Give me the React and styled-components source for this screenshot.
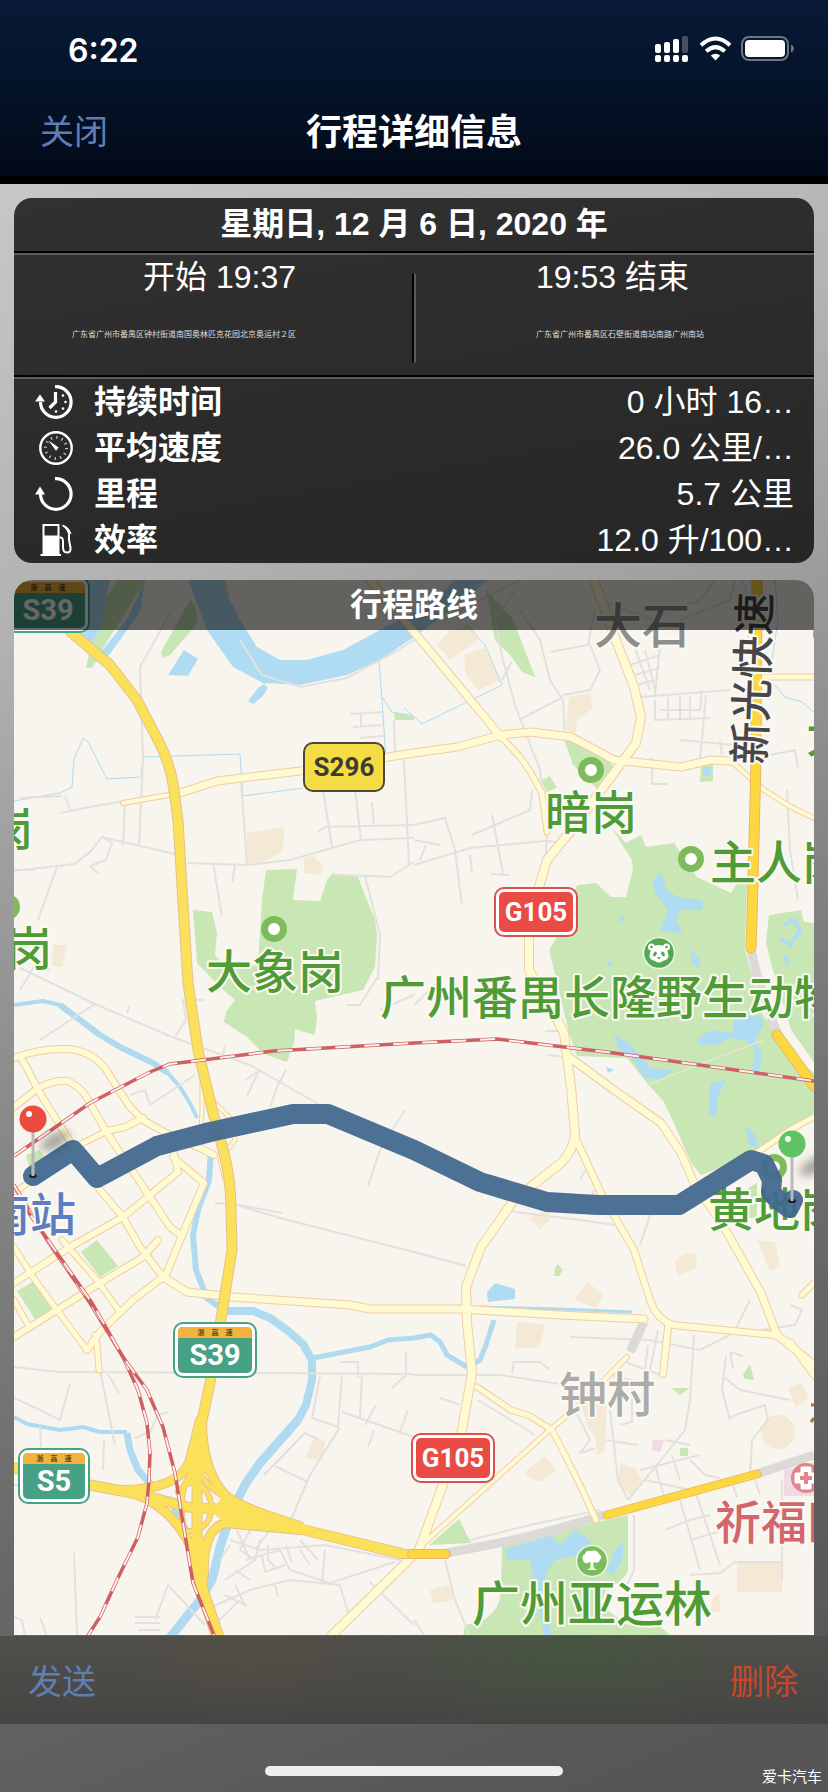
import React from "react";
import styled, { createGlobalStyle } from "styled-components";

const App = () => {
  return (
    <Page>
      <GlobalStyle />
      <Header>
        <StatusBar>
          <Clock>6:22</Clock>
          <StatusIcons />
        </StatusBar>
        <NavBar>
          <NavButton>关闭</NavButton>
          <NavTitle>行程详细信息</NavTitle>
        </NavBar>
      </Header>
      <Content>
        <Card>
          <DateTitle>星期日, 12 月 6 日, 2020 年</DateTitle>
          <Ends>
            <End $align="right">
              <Time>开始 19:37</Time>
              <Address>广东省广州市番禺区钟村街道南国奥林匹克花园北京奥运村２区</Address>
            </End>
            <EndDivider />
            <End $align="left">
              <Time>19:53 结束</Time>
              <Address>广东省广州市番禺区石壁街道南站南路广州南站</Address>
            </End>
          </Ends>
          <Stats>
            {stats.map(({ Icon, label, value }) => (
              <Stat key={label}>
                <Icon />
                <StatLabel>{label}</StatLabel>
                <StatValue>{value}</StatValue>
              </Stat>
            ))}
          </Stats>
        </Card>
        <MapPanel>
          <RouteMap />
          <MapTitle>行程路线</MapTitle>
        </MapPanel>
      </Content>
      <Toolbar>
        <ToolButton>发送</ToolButton>
        <ToolButton $danger>删除</ToolButton>
      </Toolbar>
      <Footer>
        <HomeIndicator />
        <Credit>爱卡汽车</Credit>
      </Footer>
    </Page>
  );
};

const StatusIcons = () => (
  <svg width="140" height="28" viewBox="0 0 140 28" aria-hidden="true">
    <g fill="#fff">
      <rect x="1" y="8" width="6" height="9" rx="2" />
      <rect x="10" y="6" width="6" height="11" rx="2" />
      <rect x="19" y="3" width="6" height="14" rx="2" />
      <rect x="28" y="0" width="6" height="17" rx="2" opacity="0.25" />
      <rect x="1" y="19" width="6" height="7" rx="2" />
      <rect x="10" y="19" width="6" height="7" rx="2" />
      <rect x="19" y="19" width="6" height="7" rx="2" />
      <rect x="28" y="19" width="6" height="7" rx="2" />
      <path d="M61.500 24.500 L56.800 19.500 Q61.500 15.800 66.200 19.500 Z" />
    </g>
    <g fill="none" stroke="#fff" strokeWidth="4">
      <path d="M47.000 9.200 Q61.500 -4.200 76.000 9.200" />
      <path d="M52.200 15.300 Q61.500 6.800 70.800 15.300" />
    </g>
    <rect x="88" y="1" width="46" height="23" rx="7" fill="none" stroke="#6b7584" strokeWidth="2" />
    <rect x="91" y="4" width="40" height="17" rx="4" fill="#fff" />
    <path d="M137 8.500 Q140 10 140 12.500 Q140 15 137 16.500 Z" fill="#6b7584" />
  </svg>
);

const DurationIcon = () => (
  <svg width="40" height="36" viewBox="0 0 40 36" aria-hidden="true">
    <path d="M21 2.700 A15.300 15.300 0 1 1 6.500 18" fill="none" stroke="#fff" strokeWidth="3.200" />
    <path d="M1 17.500 L6 10.500 L11 17.500 Z" fill="#fff" />
    <path d="M21.500 8 V18 L15.500 24" fill="none" stroke="#fff" strokeWidth="3.200" />
    <g fill="#fff">
      <circle cx="29" cy="11.500" r="1.300" />
      <circle cx="31.500" cy="18" r="1.300" />
      <circle cx="29" cy="24.500" r="1.300" />
      <circle cx="22" cy="27.500" r="1.300" />
    </g>
  </svg>
);

const SpeedIcon = () => (
  <svg width="40" height="36" viewBox="0 0 40 36" aria-hidden="true">
    <circle cx="22" cy="18" r="15.700" fill="none" stroke="#fff" strokeWidth="2.400" />
    <circle cx="22" cy="18" r="10.500" fill="none" stroke="#ccc" strokeWidth="3" strokeDasharray="1.200 4.298" />
    <path d="M14.500 10.500 L24.700 17.500 L22 20.700 Z" fill="#fff" />
  </svg>
);

const DistanceIcon = () => (
  <svg width="40" height="36" viewBox="0 0 40 36" aria-hidden="true">
    <path d="M21 2.700 A15.300 15.300 0 1 1 6.500 18" fill="none" stroke="#fff" strokeWidth="3.200" />
    <path d="M1 18.500 L6 10.500 L11 18.500 Z" fill="#fff" />
  </svg>
);

const FuelIcon = () => (
  <svg width="40" height="36" viewBox="0 0 40 36" aria-hidden="true">
    <path d="M8.500 2 H25.500 V32 H27 V34 H6.500 V32 H8.500 Z M10.500 4 V13.500 H23.500 V4 Z" fill="#fff" fillRule="evenodd" />
    <path
      d="M25.500 15.500 Q29 15 29 19 V25 Q29 30.500 33 30.500 Q37 30.500 36.500 26 L35 18 V11"
      fill="none"
      stroke="#fff"
      strokeWidth="2"
    />
    <path d="M28.500 2.500 Q35.500 5 37.500 12 L33.500 11 Q33 7 28.500 4.500 Z" fill="#fff" />
  </svg>
);

const stats = [
  { Icon: DurationIcon, label: "持续时间", value: "0 小时 16…" },
  { Icon: SpeedIcon, label: "平均速度", value: "26.0 公里/…" },
  { Icon: DistanceIcon, label: "里程", value: "5.7 公里" },
  { Icon: FuelIcon, label: "效率", value: "12.0 升/100…" },
];

const parks = [
  "M266 870 L297 869 L293 900 L320 901 L327 880 L333 873 L358 877 L375 920 L377 935 L375 967 L363 990 L315 1001 L317 1017 L315 1035 L295 1029 L294 1043 L287 1062 L275 1058 L263 1053 L247 1037 L224 1022 L226 1012 L235 1000 L220 987 L197 963 L193 910 L212 912 L217 933 L215 955 L225 968 L258 965 L262 900Z",
  "M611 827 L626 843 L641 835 L646 847 L674 843 L697 877 L731 893 L737 883 L747 883 L745 950 L764 1017 L781 1033 L806 1067 L814 1073 L814 1113 L761 1147 L734 1163 L701 1175 L691 1163 L677 1130 L664 1102 L647 1083 L627 1058 L577 1056 L569 1033 L554 970 L549 950 L557 937 L577 885 L596 883 L611 897 L626 897 L633 870 L632 860Z",
  "M769 915 L801 910 L804 922 L814 923 L814 1062 L791 1030 L772 967 L766 943Z",
  "M98 610 L118 580 L146 580 L108 640 L92 668 L86 668Z",
  "M190 600 Q200 608 196 625 L170 655 L162 658 L161 652Z",
  "M214 580 L226 580 L229 596 L220 592Z",
  "M486 590 L512 618 L521 640 L535 677 L522 672 L510 655 L495 640Z",
  "M564 739 Q600 748 613 767 Q612 778 598 790 L588 780 L573 765Z",
  "M542 780 L550 776 L557 788 L546 792Z",
  "M701 764 L713 764 L713 781 L700 782Z",
  "M394 712 L414 717 L414 720 L395 720Z",
  "M81 1252 L97 1240 L118 1266 L100 1277Z",
  "M17 1291 L34 1281 L52 1310 L36 1321Z",
  "M26 1155 L40 1150 L46 1160 L30 1170Z",
  "M748 1188 L757 1183 L757 1218 L748 1218Z",
  "M429 1545 L459 1519 L471 1543Z",
  "M502 1545 L628 1515 L628 1570 Q625 1580 606 1590 L600 1605 L628 1625 L653 1620 L672 1637 L463 1637 L465 1625 Q500 1620 501 1590Z",
  "M555 1268 L558 1264 L563 1270 L559 1276 L554 1276Z",
  "M743 1375 L750 1364 L754 1380 L745 1379Z",
  "M671 1388 L690 1388 L680 1395Z",
  "M680 1448 L688 1448 L688 1456 L680 1456Z",
];

const blocks = [
  "M247 833 L284 827 L283 851 L262 863 L247 863Z",
  "M304 858 L313 856 L323 865 L321 875 L304 873Z",
  "M450 630 L470 625 L478 640 L450 660 L437 645Z",
  "M464 655 L485 648 L500 680 L478 690 L466 675Z",
  "M569 697 L590 693 L593 708 L577 720 L575 735 L566 730Z",
  "M53 945 L67 945 L62 967 L52 966Z",
  "M517 1322 L545 1324 L541 1342 L535 1348 L515 1349Z",
  "M574 1300 L588 1282 L603 1295 L596 1308Z",
  "M675 1262 Q683 1250 696 1255 L697 1267 L678 1276Z",
  "M757 1240 L775 1242 L780 1265 L770 1272Z",
  "M788 1388 L802 1383 L808 1398 L796 1408Z",
  "M525 1472 L545 1456 L557 1470 L540 1482 L530 1478Z",
  "M620 1463 L635 1468 L642 1480 L631 1495 L618 1485Z",
  "M737 1563 L782 1563 L782 1592 L737 1592Z",
  "M430 1590 L452 1584 L453 1600 L433 1604Z",
  "M314 1438 L326 1441 L320 1461 L306 1458Z",
  "M581 1405 L607 1403 L605 1452 L597 1455 L595 1436 L588 1428Z",
  "M528 1218 L548 1210 L550 1220 L540 1229Z",
  "M712 1600 L719 1592 L720 1612 L711 1612Z",
];

const lakes = [
  "M188 580 L207 630 L233 667 L263 683 L268 688 L262 697 L253 704 L248 701 L258 688 L266 683 L300 685 L347 675 L380 660 L414 637 L440 618 L488 580 L455 580 L430 605 L380 630 L343 650 L307 660 L280 660 L257 647 L240 620 L225 590 L222 580Z",
  "M78 631 L86 580 L110 580 L100 630 L90 645Z",
  "M145 580 L140 612 L107 658 L101 652 L128 618Z",
  "M184 650 L198 659 L188 676 L168 675Z",
  "M653 880 L662 872 L666 890 L680 898 L703 900 L702 910 L680 910 L676 920 L683 933 L660 931 L668 910 L655 893Z",
  "M614 1034 L627 1042 L641 1055 L650 1068 L673 1070 L660 1080 L643 1077 L635 1062 L618 1048Z",
  "M697 1038 L712 1030 L732 1033 L735 1018 L760 1015 L764 1025 L755 1040 L762 1055 L758 1078 L752 1070 L755 1050 L745 1040 L730 1038 L718 1045 L698 1044Z",
  "M710 1084 L726 1080 L718 1096 L716 1117 L709 1115Z",
  "M690 948 L700 960 L699 969 L692 962Z",
  "M605 962 L613 962 L610 968Z",
  "M606 1067 L614 1070 L608 1073Z",
  "M618 918 L625 916 L622 924Z",
  "M745 1125 L755 1135 L760 1150 L748 1143Z",
  "M487 1292 L495 1283 L515 1289 L515 1299 L488 1302Z",
  "M504 1550 L550 1535 L560 1545 L575 1530 L590 1540 L590 1553 L555 1560 L545 1575 L545 1592 L552 1637 L545 1637 L535 1590 L530 1560 L508 1560Z",
  "M607 1570 L615 1550 L624 1542 L622 1562 L612 1575Z",
  "M703 767 L711 767 L711 776 L703 776Z",
  "M170 1495 L190 1530 L186 1530 L172 1515Z",
];

const rivers = [
  { w: 4, d: "M14 1005 L43 1001 L60 1005" },
  { w: 6, d: "M60 1005 L72 1014 L100 1035 L120 1047 L153 1063 L168 1073" },
  { w: 4, d: "M168 1073 L180 1087 L190 1103 L197 1118" },
  { w: 6, d: "M211 1150 L209 1180 L198 1210 L193 1235 L196 1270 L207 1298 L225 1311" },
  { w: 8, d: "M225 1311 L253 1311 L270 1318 L287 1330 L303 1344 L312 1360 L312 1380 L306 1405 L298 1420" },
  { w: 9, d: "M298 1420 L260 1463 L246 1483 L233 1508 L220 1547 L212 1580 L200 1600 L168 1640" },
  { w: 5, d: "M313 1358 L370 1347 L388 1340 L414 1338 L431 1335 L440 1342 L447 1355 L467 1367 L480 1360 L486 1345 L494 1320" },
  { w: 4, d: "M14 1417 L27 1424 L60 1430 L83 1427 L100 1432 L127 1432" },
  { w: 7, d: "M127 1433 L130 1450 L138 1470 L153 1487" },
  { w: 3, d: "M481 1307 L560 1309 L632 1312" },
  { w: 1, d: "M14 801 L60 793 L72 787 L74 760 L83 738 L88 742 L107 779 L141 777 L143 757 L240 754 L243 796 L303 788" },
  { w: 1, d: "M379 660 L382 700 L386 760 M382 697 L392 712 L414 716" },
  { w: 1, d: "M466 624 L485 645 L502 685 L422 724 L404 708" },
  { w: 1, d: "M742 580 L750 605 L748 640 M775 580 L778 620 L772 660 M770 680 L785 697 L802 702 L814 712" },
];

const streets = [
  "M172 610 L140 667 L143 760 L139 846 M14 871 L74 864 L90 852 L102 837 L175 854",
  "M14 870 L35 870 M57 867 L38 920 M102 837 L112 843 L106 860 L90 866 L99 874",
  "M60 813 L90 807 L124 801 M125 802 L123 845 M65 796 L70 810 M20 798 L62 796",
  "M188 863 L247 865 L290 860 L360 840 L414 838 M241 780 L247 865 M213 863 L222 916 M235 866 L232 882",
  "M323 790 L332 847 M318 832 L325 827 L414 825 M355 790 L361 840 M372 802 L374 827 M404 760 L409 865",
  "M350 714 L384 712 M361 714 L361 727 M353 727 L384 725 M360 738 L384 736 M394 720 L395 752",
  "M333 875 L375 876 L390 877 L414 862 M365 876 L380 935 L378 980 M377 978 L360 1005 L347 1005",
  "M20 968 L95 1004 L172 1037 L250 1065 L320 1105 M95 1004 L40 1040 M127 1013 L130 1005 M175 1037 L186 1020 L183 1000 L203 1000",
  "M130 1095 L145 1090 L150 1105 L195 1075 M222 1060 L225 1045 M245 1080 L258 1072 L247 1096 M286 1070 L278 1085 L270 1107",
  "M405 1110 L380 1150 L368 1186 M215 1203 L240 1205 L282 1213 M240 1206 L280 1218 L414 1252 L466 1266",
  "M240 640 L262 675 L300 687 L347 678 L395 652 L414 640 M414 1252 L466 1266",
  "M443 620 L480 600 L520 580 M515 590 L495 620 L503 660 L515 705 L540 770 L543 790",
  "M520 610 L540 640 L550 680 L563 700 L565 740 M550 652 L588 645 L595 610 M590 645 L600 670 L590 690 L563 695",
  "M519 720 L563 697 M512 661 L502 680 M640 697 L730 690 M655 700 L655 720 L710 718 M660 710 L700 710 L702 690 M668 697 L668 720 M680 697 L680 720 M690 697 L690 720",
  "M632 640 L650 690 M645 650 L655 690 M630 665 L660 655 M635 675 L660 668 M637 685 L655 680 M660 645 L655 695",
  "M706 695 L700 760 M652 757 L652 784 L668 784 M680 740 L735 745 M770 755 L795 750 L798 768",
  "M414 825 L445 818 L455 850 L462 905 M472 835 L530 810 L532 790 M492 815 L503 873 L500 875 M414 865 L470 848 L545 841 L560 842",
  "M547 832 L545 870 M414 840 L440 845 M426 845 L420 860 M491 874 L510 875 M470 855 L472 872",
  "M787 790 L790 850 L798 900 M720 740 L722 755 M680 620 L730 600 L735 580 M600 600 L650 620 L700 600 L715 580",
  "M545 1031 L560 1031 M548 1055 L565 1057 M414 1005 L440 980 M380 1010 L414 995",
  "M14 1367 L60 1372 L414 1374 M100 1370 L115 1445 M108 1374 L119 1393 M40 1426 L41 1447 M104 1440 L103 1470",
  "M14 1398 L40 1410 L60 1420 L70 1383 M135 1438 L150 1432 L158 1415 L168 1412",
  "M320 1376 L312 1418 L338 1427 L342 1375 M342 1412 L414 1437 M362 1375 L360 1418 M376 1405 L365 1425 M340 1362 L358 1362 L358 1378 M406 1352 L406 1375 L392 1388 M340 1427 L310 1475 L290 1522 M408 1410 L400 1432 M374 1430 L368 1447",
  "M264 1475 L305 1433 L320 1440 M275 1466 L308 1482",
  "M74 1553 L77 1637 M135 1617 L160 1617 M135 1623 L160 1623 M138 1630 L160 1630 M155 1620 L168 1585 L205 1625 M40 1617 L47 1637 M14 1617 L22 1620 L25 1637",
  "M230 1540 L260 1550 L325 1545 L400 1560 M225 1580 L255 1560 L260 1540 M237 1530 L250 1560 M245 1560 L280 1550 M280 1550 L290 1570 L330 1583 L395 1562 M262 1555 L265 1572 L285 1565 M270 1530 L255 1550 M300 1550 L310 1565 M325 1550 L322 1583",
  "M205 1610 L250 1590 L290 1580 L340 1585 L350 1620 M225 1595 L245 1605 L235 1585 M214 1625 L240 1600 M370 1582 L414 1625 M275 1585 L278 1597",
  "M230 1545 L220 1560 M250 1530 L240 1550 L255 1560 M268 1545 L268 1560 L278 1570 M286 1545 L292 1563 M300 1540 L318 1560 M235 1570 L250 1580",
  "M414 1375 L500 1375 L560 1384 M512 1373 L514 1362 L540 1362 L550 1370 M440 1398 L460 1405 M478 1400 L535 1435 M570 1337 L650 1340 L700 1350 L730 1335",
  "M658 1330 L648 1380 L640 1400 M694 1335 L690 1400 L685 1430 L665 1455 L628 1500 M648 1345 L645 1370 M620 1360 L660 1375 M610 1375 L655 1385",
  "M726 1356 L722 1390 L730 1420 M725 1378 L740 1390 L790 1400 M730 1417 L765 1405 L768 1420 L752 1440 L750 1475 M730 1352 L733 1368 M730 1352 L743 1356",
  "M610 1410 L618 1480 L628 1500 M640 1470 L700 1455 M655 1465 L665 1500 M672 1455 L680 1480 M690 1460 L705 1475 L720 1478 M645 1480 L690 1490 M665 1440 L690 1445",
  "M680 1500 L700 1570 M695 1490 L720 1565 M665 1530 L690 1520 L710 1515 M690 1540 L718 1532 M733 1485 L737 1497 M755 1480 L760 1495",
  "M634 1515 L634 1570 L625 1590 M690 1575 L720 1573 L735 1562 L782 1562 M782 1480 L782 1580 M445 1560 L455 1600 L470 1637 M414 1620 L425 1637",
  "M735 1330 L750 1300 M790 1305 L802 1310 L795 1325 L760 1330 M575 1410 L590 1440 L580 1453 L595 1448 M606 1440 L637 1445 M620 1425 L632 1422 L632 1380",
  "M500 1210 L580 1220 L615 1225 M650 1215 L640 1245 M594 1190 L590 1210 M585 1170 L580 1180",
  "M470 1540 L530 1525 L600 1510 M476 1545 L600 1515 M14 1485 L30 1486 M20 990 L35 965 L50 970",
];

const tunnels = [
  "M447 1553 L530 1537 L604 1515",
  "M757 1474 L814 1455",
  "M751 950 L757 975 L777 1033",
  "M644 1322 L630 1352",
  "M756 640 L756 760",
];

const roads = [
  { w: 6, d: "M14 1058 Q40 1048 67 1049 Q90 1050 105 1068 L117 1087 L130 1107 L143 1120 L173 1137 L200 1148 L214 1155" },
  { w: 6, d: "M22 1060 L28 1070 L38 1090 L63 1130 L100 1190 L123 1217 L140 1247 L163 1277" },
  { w: 6, d: "M14 1107 L38 1088 Q55 1079 68 1081 Q80 1087 86 1096 L107 1133 L150 1197 L170 1227 L182 1236" },
  { w: 6, d: "M107 1131 L125 1127 L143 1118" },
  { w: 5, d: "M14 1193 L83 1143 L107 1131" },
  { w: 6, d: "M14 1283 L70 1247 L123 1217 L150 1195 L178 1172 L171 1140" },
  { w: 6, d: "M173 1157 L204 1183 L183 1233 L165 1277" },
  { w: 6, d: "M14 1337 L57 1310 L100 1283 L143 1257 L158 1240" },
  { w: 5, d: "M14 1247 L33 1277 L57 1310 L87 1350" },
  { w: 5, d: "M14 1300 L28 1325" },
  { w: 6, d: "M87 1350 L100 1332 L133 1300 L163 1277" },
  { w: 5, d: "M62 1240 L97 1280 L120 1312" },
  { w: 5, d: "M95 1335 L97 1345 L99 1370" },
  { w: 7, d: "M163 1277 L187 1292 L233 1297 L350 1305 L370 1309 L461 1309 L560 1315 L644 1319" },
  { w: 3, d: "M200 1150 L202 1110 L202 1080 M212 1100 L230 1118 L235 1140 L220 1160 L225 1180" },
  { w: 4, d: "M123 803 L180 793" },
  { w: 7, d: "M180 793 L217 781 L300 771 L414 753 L457 747 L501 735 L531 732 L571 737 L590 747 L614 760 L681 767 L711 760 L731 761" },
  { w: 4, d: "M731 761 L764 790 L791 807 L814 818" },
  { w: 7, d: "M370 580 L414 632 L454 680 L501 737" },
  { w: 5, d: "M501 737 L520 757 L531 773 L542 793 L547 832" },
  { w: 8, d: "M594 580 L617 643 L634 687 L641 717 L636 743 L611 777 L574 827 L547 860 L539 887 L529 937 L529 970 L547 1000 L564 1033 L571 1087 L575 1133 Q574 1150 561 1163 L514 1200 L481 1247 L466 1287 L467 1323 L472 1373 L462 1430 L441 1490 L419 1550 L327 1640" },
  { w: 6, d: "M575 1137 L601 1193 L634 1250 L651 1303 Q658 1320 673 1325 L774 1335 L791 1343 L814 1375" },
  { w: 7, d: "M569 1057 L614 1090 L661 1123 L681 1153 L694 1183 L724 1227 L737 1250 L761 1293 L777 1335 L814 1365" },
  { w: 5, d: "M758 1152 L790 1130 L814 1117" },
  { w: 6, d: "M668 1327 L663 1374" },
  { w: 5, d: "M477 1387 L511 1410 L530 1416 L552 1430 L564 1453 L580 1485 L596 1520" },
  { w: 4, d: "M424 1543 L552 1428 L574 1410 L627 1357" },
  { w: 5, d: "M760 677 L814 677" },
  { w: 5, d: "M802 1295 L814 1283" },
];

const highways = [
  { w: 9, d: "M50 608 L72 633 L110 665 L137 700 L158 740 Q171 765 174 790 L178 820 L184 920 L188 983 L198 1050 L213 1113 L224 1153 Q231 1180 231 1210 L232 1250 L222 1313 L210 1383 L200 1430 L197 1470 L197 1550" },
  { w: 9, d: "M14 1468 L90 1485 L143 1495 L187 1507 L233 1510 L300 1529 L400 1553" },
  { w: 8, d: "M120 1490 Q180 1490 190 1460 L200 1420" },
  { w: 8, d: "M202 1420 Q202 1470 225 1495 Q240 1508 300 1526" },
  { w: 8, d: "M130 1492 Q170 1505 190 1545 L202 1590" },
  { w: 8, d: "M204 1575 Q202 1530 225 1523 L300 1530" },
  { w: 11, d: "M197 1540 L202 1590 L219 1640" },
  { w: 4, d: "M184 1530 Q178 1500 186 1484 Q200 1480 208 1494 Q216 1510 206 1524 Q196 1534 184 1530" },
  { w: 4, d: "M203 1478 Q216 1496 238 1502 M203 1546 Q210 1528 236 1518 M178 1492 Q188 1484 192 1466" },
  { w: 8, d: "M300 1529 L400 1554 L446 1554" },
];

// filled gores between the ramps of the interchange
const gores = [
  "M196 1440 L204 1440 L208 1470 L196 1490 L190 1484 L188 1465Z",
  "M222 1496 Q250 1508 300 1522 L330 1536 L262 1524 L224 1522 L212 1512Z",
  "M110 1486 L148 1490 L166 1500 L148 1501 L120 1495Z",
  "M192 1535 L203 1540 L205 1580 L198 1570Z",
];

const deepHighways = [
  { w: 9, d: "M757 580 L756 760 L752 920 L751 948" },
  { w: 9, d: "M777 1035 L814 1086" },
  { w: 7, d: "M607 1515 L757 1474" },
  { w: 8, d: "M412 1554 L445 1554" },
];

const rails = [
  "M14 1156 L90 1103 L150 1072 L170 1064 L203 1060 L273 1051 L414 1043 L497 1039 L614 1053 L814 1081",
  "M14 1185 L47 1240 L90 1303 L123 1357 L138 1390 L147 1423 L150 1453 L149 1480 L147 1503 L138 1537 L117 1580 L100 1617 L85 1640",
  "M14 1192 L48 1240 L92 1303 L123 1357 L147 1390 L163 1427 L175 1473 L182 1517 L187 1547 L193 1583 L216 1640",
];

const route =
  "M33 1176 L73 1150 L97 1178 L157 1146 L210 1132 L293 1114 L328 1114 L414 1150 L480 1182 L547 1202 L597 1205 L679 1205 L751 1160 L764 1164 L772 1180 L771 1192 L778 1200 L789 1208 L793 1200";

const RouteMap = () => (
  <MapDrawing viewBox="14 580 800 1055" role="img" aria-label="行程路线">
    <rect x="14" y="580" width="800" height="1060" fill="#f8f5ee" />
    <g fill="#f4e9d5">
      {blocks.map((d) => (
        <path key={d} d={d} />
      ))}
      <circle cx="778" cy="1432" r="17" />
    </g>
    <g fill="#c9e6b5">
      {parks.map((d) => (
        <path key={d} d={d} />
      ))}
    </g>
    <path d="M784 1470 L814 1462 L814 1496 L784 1496Z M653 1440 L664 1440 L660 1452 L652 1450Z" fill="#f1d9e6" />
    <g fill="#afdcf3">
      {lakes.map((d) => (
        <path key={d} d={d} />
      ))}
    </g>
    <path d="M783 925 L795 920 L800 930 L790 945 L780 938 M785 955 L788 965" fill="none" stroke="#afdcf3" strokeWidth="4" />
    <g fill="none" stroke="#afdaf0" strokeLinejoin="round">
      {rivers.map(({ w, d }) => (
        <path key={d} d={d} strokeWidth={w} />
      ))}
    </g>
    <g fill="none" stroke="#e3e1de" strokeWidth="2">
      {streets.map((d) => (
        <path key={d} d={d} />
      ))}
    </g>
    <g fill="none" stroke="#dcdad7" strokeWidth="9">
      {tunnels.map((d) => (
        <path key={d} d={d} />
      ))}
    </g>
    <path d="M647 1085 L690 1068 L764 1040" fill="none" stroke="#dfe9cf" strokeWidth="1.5" />
    <Lines items={roads} casing="#f0cda6" fill="#fefad2" />
    <Lines items={highways} casing="#e8bf8c" fill="#fbe159" />
    <g fill="#fbe159">
      {gores.map((d) => (
        <path key={d} d={d} />
      ))}
    </g>
    <Lines items={deepHighways} casing="#e9b765" fill="#fdd740" />
    <g fill="none">
      {rails.map((d) => (
        <g key={d}>
          <path d={d} stroke="#cf5f63" strokeWidth="3.500" />
          <path d={d} stroke="#fdf3ee" strokeWidth="2" strokeDasharray="15 14" />
        </g>
      ))}
    </g>

    <Dot cx="591" cy="770" />
    <Dot cx="691" cy="859" />
    <Dot cx="274" cy="929" />
    <Dot cx="7" cy="907" />
    <Dot cx="774" cy="1167" />
    <Dot cx="826" cy="634" />

    <circle cx="659" cy="953" r="15.500" fill="#55a655" stroke="#eef6e6" strokeWidth="1.500" />
    <g fill="#fff">
      <circle cx="651.500" cy="947" r="3.500" />
      <circle cx="666.500" cy="947" r="3.500" />
      <path d="M659 945 C665 945 668 950 668 954 C670 957 667 960 663 961 Q659 964 655 961 C651 960 648 957 650 954 C650 950 653 945 659 945Z" />
    </g>
    <g fill="#55a655">
      <circle cx="651.500" cy="947" r="1.300" />
      <circle cx="666.500" cy="947" r="1.300" />
      <ellipse cx="655" cy="954" rx="1.600" ry="2.600" transform="rotate(30 655 954)" />
      <ellipse cx="663" cy="954" rx="1.600" ry="2.600" transform="rotate(-30 663 954)" />
      <path d="M657 957 H661 L659 959.500Z" />
    </g>

    <circle cx="592" cy="1561" r="15.500" fill="#79bd5c" stroke="#eef6e6" strokeWidth="1.500" />
    <path
      d="M590.500 1562 Q584 1565 583 1560 Q581 1556 585 1554 Q586 1550 591 1551 Q597 1549 599 1554 Q603 1556 600 1560 Q599 1564 593.500 1562 V1567 Q594 1569 597 1570 H587 Q590 1569 590.500 1567Z"
      fill="#fff"
    />

    <circle cx="806" cy="1478" r="15" fill="#e28488" />
    <path d="M802 1468 H810 V1474 H816 V1482 H810 V1488 H802 V1482 H796 V1474 H802Z" fill="#fff" stroke="#fff" strokeWidth="3" strokeLinejoin="round" />
    <path d="M804 1472 H808 V1476 H812 V1480 H808 V1484 H804 V1480 H800 V1476 H804Z" fill="#e28488" />
    <path d="M811 1405 h3 M811 1422 l3 -4" stroke="#a3793a" strokeWidth="3" />

    <MapLabel x="591" y="829" textAnchor="middle">暗岗</MapLabel>
    <MapLabel x="710" y="879">主人岗</MapLabel>
    <MapLabel x="275" y="988" textAnchor="middle">大象岗</MapLabel>
    <MapLabel x="33" y="845" textAnchor="end">岗</MapLabel>
    <MapLabel x="52" y="965" textAnchor="end">岗</MapLabel>
    <MapLabel x="806" y="752">大</MapLabel>
    <MapLabel x="380" y="1014">广州番禺长隆野生动物</MapLabel>
    <MapLabel x="708" y="1226">黄地岗</MapLabel>
    <MapLabel x="592" y="1621" textAnchor="middle" $size={48}>广州亚运林</MapLabel>
    <MapLabel x="607" y="1412" textAnchor="middle" $size={48} $color="#acaba8">钟村</MapLabel>
    <MapLabel x="642" y="643" textAnchor="middle" $size={48} $color="#8f8e8b">大石</MapLabel>
    <MapLabel x="76" y="1231" textAnchor="end" $color="#5b7dc2">南站</MapLabel>
    <MapLabel x="715" y="1539" $color="#d2666c">祈福医</MapLabel>
    <MapLabel transform="translate(765 765) rotate(-88)" $size={43} $color="#4a4648">新光快速</MapLabel>

    <ExpressShield x={6} y={577} width={84} text="S39" />
    <ExpressShield x={173} y={1322} width={84} text="S39" />
    <ExpressShield x={18} y={1448} width={72} text="S5" />
    <NationalShield x={494} y={887} />
    <NationalShield x={411} y={1433} />
    <rect x="304" y="743" width="80" height="48" rx="9" fill="#f3dc44" stroke="#4d473a" strokeWidth="2" />
    <ShieldText x="344" y="776" fill="#3f3a30" $size={26}>S296</ShieldText>

    <path d={route} fill="none" stroke="#42688f" strokeWidth="20" strokeLinejoin="round" strokeLinecap="round" opacity="0.94" />
    <Pin x={33} y={1119} color="#ea4b3d" />
    <Pin x={792} y={1144} color="#5fc464" />
  </MapDrawing>
);

const Lines = ({ items, casing, fill }) => (
  <g fill="none" strokeLinejoin="round" strokeLinecap="round">
    {items.map(({ w, d }) => (
      <path key={d} d={d} stroke={casing} strokeWidth={w + 2} />
    ))}
    {items.map(({ w, d }) => (
      <path key={d} d={d} stroke={fill} strokeWidth={w} />
    ))}
  </g>
);

const Dot = ({ cx, cy }) => (
  <circle cx={cx} cy={cy} r="9.500" fill="#fff" stroke="#7dbb5b" strokeWidth="7" />
);

const ExpressShield = ({ x, y, width, text }) => (
  <g transform={`translate(${x} ${y})`}>
    <rect x="1" y="1" width={width - 2} height="54" rx="9" fill="#fff" stroke="#47a184" strokeWidth="2" />
    <rect x="5" y="5" width={width - 10} height="46" rx="5" fill="#47a184" />
    <path d={`M5 16 V10 Q5 5 10 5 H${width - 10} Q${width - 5} 5 ${width - 5} 10 V16Z`} fill="#f2b23e" />
    <ShieldCaption x={width / 2} y="13">浙　高　速</ShieldCaption>
    <ShieldText x={width / 2} y="43" fill="#fff">{text}</ShieldText>
  </g>
);

const NationalShield = ({ x, y }) => (
  <g transform={`translate(${x} ${y})`}>
    <rect x="1" y="1" width="82" height="48" rx="9" fill="#fff" stroke="#dd4e4c" strokeWidth="2" />
    <rect x="5" y="5" width="74" height="40" rx="5" fill="#ea4b45" />
    <ShieldText x="42" y="34" fill="#fff" $size={26}>G105</ShieldText>
  </g>
);

const Pin = ({ x, y, color }) => (
  <g transform={`translate(${x} ${y})`}>
    <PinShadow cx="22" cy="22" rx="16" ry="7" transform="rotate(-30 22 22)" />
    <ellipse cx="0" cy="57" rx="4" ry="2" fill="#14202c" />
    <rect x="-1.500" y="10" width="3" height="47" fill="#b9b9b9" />
    <circle r="13.500" fill={color} />
    <circle cx="-4" cy="-5" r="3" fill="#fff" />
  </g>
);

const GlobalStyle = createGlobalStyle`
  body {
    margin: 0;
    font-family: "Liberation Sans", "Noto Sans CJK SC", sans-serif;
    color: white;
  }

  button {
    font-family: inherit;
    background: none;
    border: none;
    padding: 0;
    cursor: pointer;
  }
`;

const Page = styled.div`
  display: flex;
  flex-direction: column;
  min-height: 100vh;
  background: linear-gradient(
    158deg,
    #c8c8c8 8%,
    #b2b2b2 30%,
    #999999 44%,
    #808080 58%,
    #686868 74%,
    #585858 92%,
    #545454 100%
  );
`;

const Header = styled.header`
  background: linear-gradient(#081a36, #051329 50%, #020a18);
  border-bottom: 8px solid black;
`;

const StatusBar = styled.div`
  display: flex;
  justify-content: space-between;
  align-items: center;
  height: 88px;
  box-sizing: border-box;
  padding: 12px 34px 0 68px;
`;

const Clock = styled.span`
  font-family: Inter, "Liberation Sans", sans-serif;
  font-size: 32px;
  font-weight: 600;
`;

const NavBar = styled.div`
  display: grid;
  grid-template-columns: 1fr auto 1fr;
  align-items: center;
  height: 88px;
  box-sizing: border-box;
  padding: 0 40px 6px;
`;

const NavButton = styled.button`
  justify-self: start;
  font-size: 34px;
  color: #5f7fb4;
`;

const NavTitle = styled.h1`
  margin: 0;
  font-size: 36px;
  font-weight: 700;
`;

const Content = styled.main`
  display: flex;
  flex-direction: column;
  flex: 1;
  gap: 17px;
  padding: 14px 14px 0;
`;

const Card = styled.section`
  background: linear-gradient(170deg, #313131, #262626);
  border-radius: 18px;
  overflow: hidden;
`;

const DateTitle = styled.h2`
  margin: 0;
  font-size: 32px;
  line-height: 53px;
  font-weight: bold;
  text-align: center;
  border-bottom: 2px solid black;
`;

const Ends = styled.div`
  display: grid;
  grid-template-columns: minmax(0, 1fr) 4px minmax(0, 1fr);
  height: 120px;
  border-top: 2px solid #5c5c5c;
  border-bottom: 2px solid black;
`;

const End = styled.div`
  padding: 0 116px 0 120px;
  display: flex;
  flex-direction: column;
  align-items: ${(props) => (props.$align === "right" ? "flex-end" : "flex-start")};
  white-space: nowrap;
`;

const EndDivider = styled.div`
  height: 90px;
  margin-top: 18px;
  box-sizing: border-box;
  border-left: 2px solid black;
  border-right: 2px solid #5c5c5c;
  border-radius: 2px;
`;

const Time = styled.p`
  margin: 0;
  font-size: 32px;
  line-height: 44px;
`;

const Address = styled.p`
  margin: 31px 0 0;
  font-size: 8px;
  line-height: 10px;
  color: #ddd;
`;

const Stats = styled.dl`
  margin: 0;
  border-top: 2px solid #5c5c5c;
`;

const Stat = styled.div`
  display: flex;
  align-items: center;
  height: 46px;
  padding: 0 20px;
`;

const StatLabel = styled.dt`
  margin-left: 20px;
  font-size: 32px;
  line-height: 46px;
  font-weight: 700;
`;

const StatValue = styled.dd`
  flex: 1;
  margin: 0;
  font-size: 32px;
  line-height: 46px;
  text-align: right;
  white-space: nowrap;
`;

const MapPanel = styled.section`
  position: relative;
  border-radius: 18px 18px 0 0;
  overflow: hidden;
`;

const MapTitle = styled.h2`
  position: absolute;
  top: 0;
  left: 0;
  right: 0;
  margin: 0;
  font-size: 32px;
  line-height: 50px;
  font-weight: 700;
  text-align: center;
  background: rgba(0, 0, 0, 0.6);
`;

const MapDrawing = styled.svg`
  display: block;
  width: 100%;
`;

const MapLabel = styled.text`
  font-family: "Noto Sans CJK SC", sans-serif;
  font-size: ${(props) => props.$size || 46}px;
  font-weight: 500;
  fill: ${(props) => props.$color || "#4f9b36"};
  stroke: #fbf9f3;
  stroke-width: 4px;
  stroke-linejoin: round;
  paint-order: stroke;
`;

const ShieldText = styled.text`
  font-family: Roboto, "Liberation Sans", sans-serif;
  font-size: ${(props) => props.$size || 29}px;
  font-weight: bold;
  text-anchor: middle;
`;

const ShieldCaption = styled.text`
  font-family: "Noto Sans CJK SC", sans-serif;
  font-size: 7px;
  font-weight: bold;
  text-anchor: middle;
  fill: #5a4518;
`;

const PinShadow = styled.ellipse`
  fill: rgba(0, 0, 0, 0.35);
  filter: blur(5px);
`;

const Toolbar = styled.div`
  display: flex;
  justify-content: space-between;
  align-items: center;
  height: 88px;
  padding: 0 30px 0 28px;
  background:
    radial-gradient(ellipse 24% 90% at 69% 20%, rgba(66, 88, 58, 0.7), transparent),
    radial-gradient(ellipse 16% 80% at 30% 15%, rgba(88, 78, 64, 0.6), transparent),
    linear-gradient(#504f4c, #454543);
`;

const ToolButton = styled.button`
  font-size: 34px;
  padding-bottom: 2px;
  color: ${(props) => (props.$danger ? "#c8472c" : "#5f7fb4")};
`;

const Footer = styled.footer`
  display: grid;
  grid-template-columns: 1fr 36% 1fr;
  align-items: end;
  height: 68px;
`;

const HomeIndicator = styled.div`
  grid-column: 2;
  height: 10px;
  margin-bottom: 16px;
  border-radius: 5px;
  background-color: #eee;
`;

const Credit = styled.span`
  justify-self: end;
  padding: 0 6px 6px 0;
  font-size: 15px;
`;

export default App;
